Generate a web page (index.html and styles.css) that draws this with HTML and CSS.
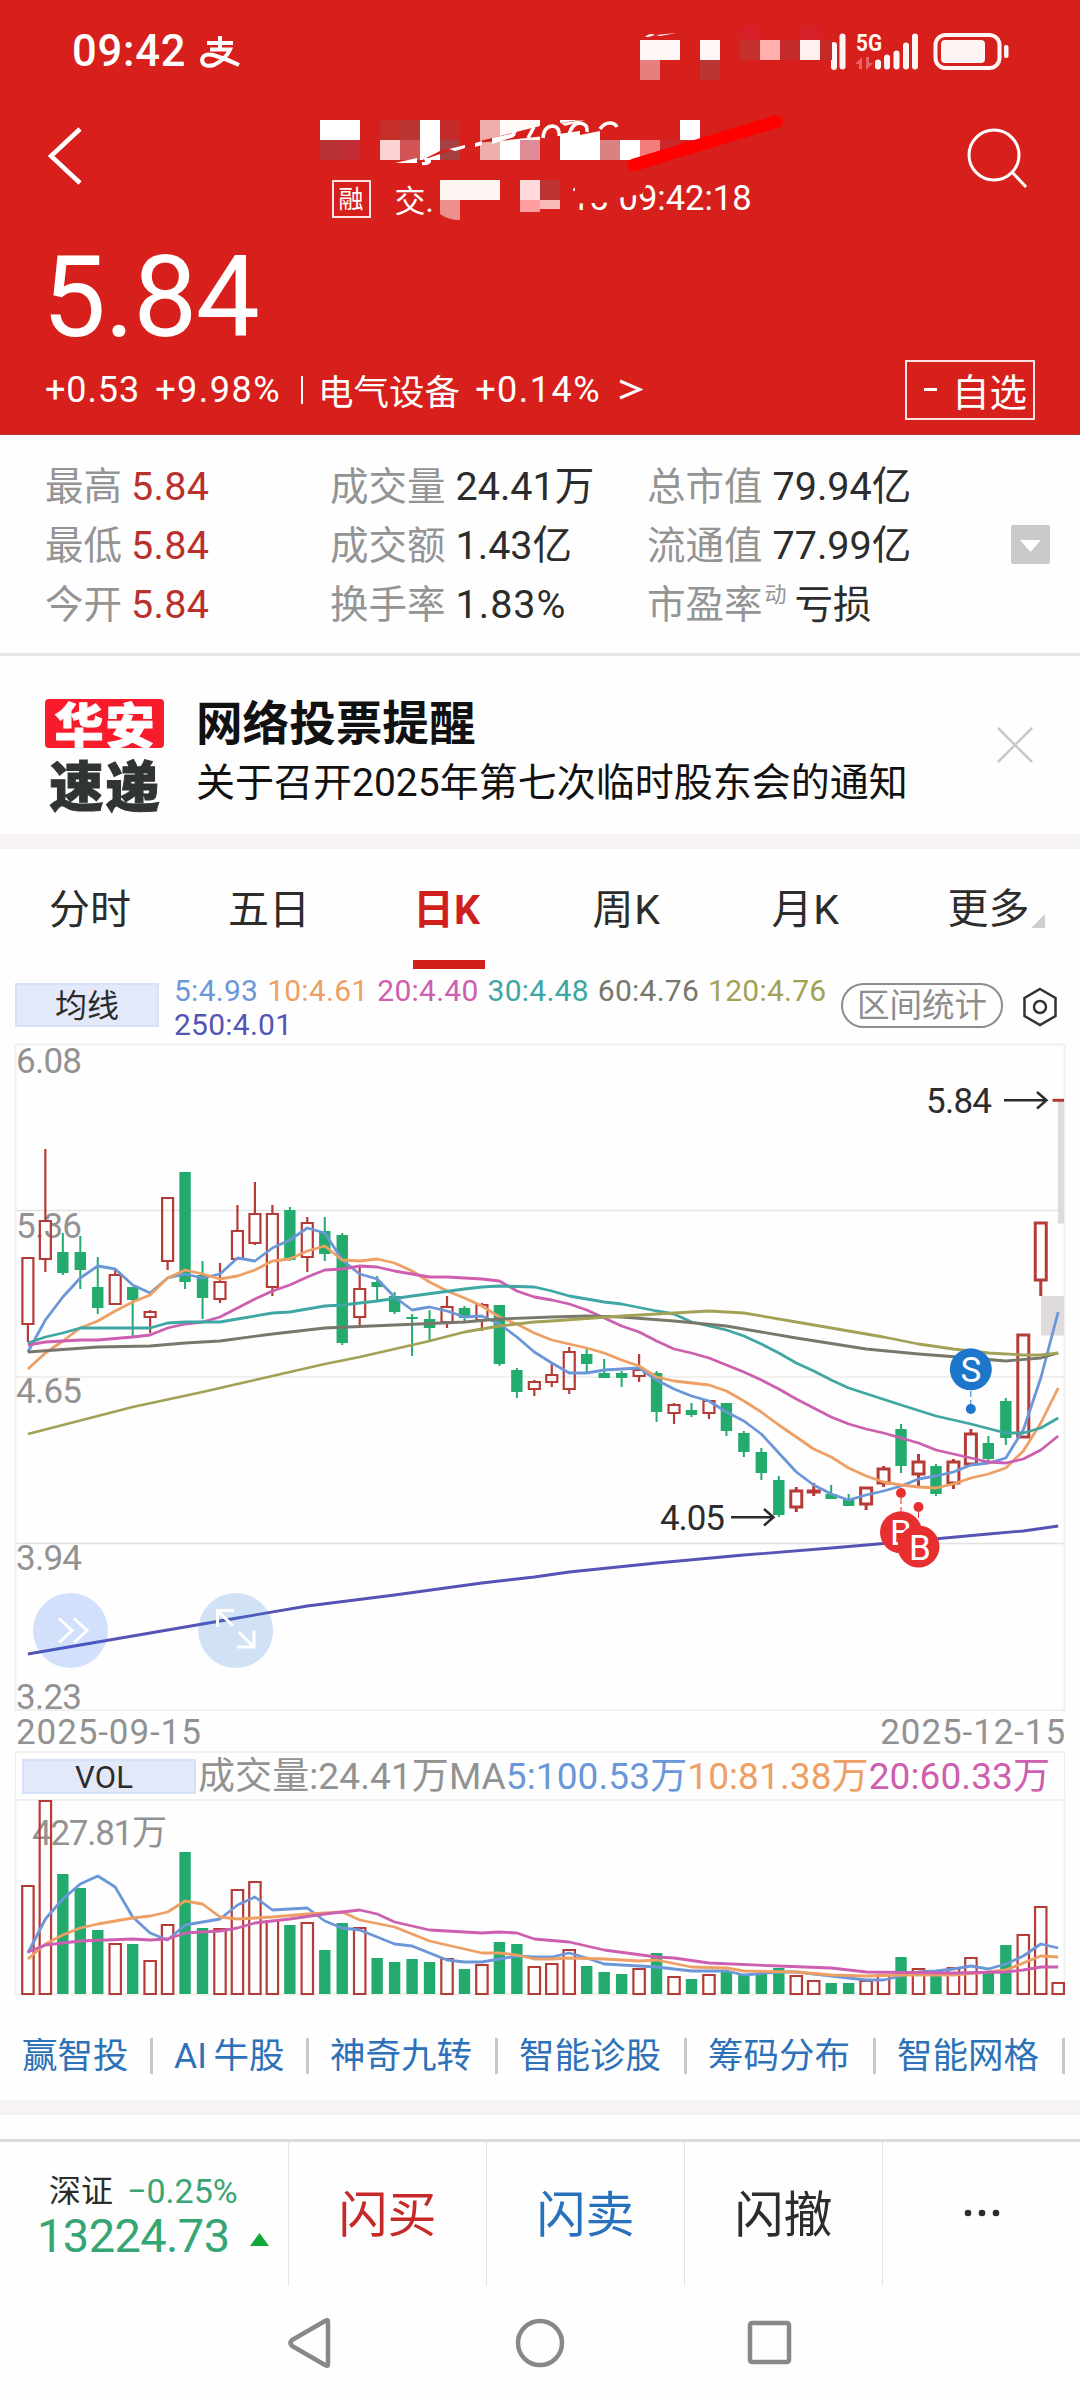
FILE: index.html
```html
<!DOCTYPE html>
<html lang="zh-CN">
<head>
<meta charset="utf-8">
<title>行情</title>
<link rel="stylesheet" href="styles.css">
</head>
<body>
<header class="header">
  <div class="status">
    <span class="clock">09:42</span>
    <svg class="pay" width="42" height="34" viewBox="0 0 42 34"><path d="M8 8H34M21 1V14M11 14.500H31Q27 24 15 30Q4 33 3 25Q4 18 14 20Q28 24 40 30"/></svg>
    <svg class="signal" width="190" height="46" viewBox="828 28 190 46">
      <path class="bar" d="M834 44V66M842.5 35.500V65.500M878 61.500V65.500M887 56.500V65.500M896.500 52.500V65.500M906 44.500V65.500M915 35.500V65.500"/>
      <text x="856" y="50" class="net" textLength="26" lengthAdjust="spacingAndGlyphs">5G</text>
      <path class="updown" d="M855 63L862 56V68H859V63ZM866 56V69L873 62H869V56Z"/>
      <rect class="battery" x="935.500" y="34" width="64" height="33" rx="10"/>
      <rect class="level" x="941" y="39" width="44" height="23" rx="4"/>
      <rect class="level" x="1004" y="44" width="4.500" height="13" rx="2"/>
    </svg>
  </div>
  <div class="titlebar">
    <svg class="back" width="34" height="60" viewBox="0 0 34 60"><path d="M32 3L3 30L32 57"/></svg>
    <div class="subtitle"><span class="tag">融</span><span class="state">交.</span><span class="day">15</span><span class="time">09:42:18</span></div>
    <svg class="search" width="64" height="64" viewBox="0 0 64 64"><circle cx="29" cy="29" r="25"/><path d="M47 46L61 61"/></svg>
  </div>
  <div class="price">5.84</div>
  <div class="change">
    <span class="delta">+0.53</span><span class="pct">+9.98%</span><i class="bar-sep"></i><span class="sector">电气设备</span><span class="pct">+0.14%</span><svg class="more" width="24" height="22" viewBox="0 0 24 22"><path d="M1 2L21 10.500L1 19"/></svg>
    <button class="watch"><span class="minus"></span>自选</button>
  </div>
  <svg class="mosaic" width="1080" height="230" viewBox="0 0 1080 230" id="mosaic"></svg>
</header>

<section class="stats">
  <div class="col c1">
    <div class="stat">最高<b class="up">5.84</b></div><div class="stat">最低<b class="up">5.84</b></div><div class="stat">今开<b class="up">5.84</b></div>
  </div>
  <div class="col c2">
    <div class="stat">成交量<b>24.41万</b></div><div class="stat">成交额<b>1.43亿</b></div><div class="stat">换手率<b class="rate">1.83%</b></div>
  </div>
  <div class="col c3">
    <div class="stat">总市值<b>79.94亿</b></div><div class="stat">流通值<b>77.99亿</b></div><div class="stat">市盈率<sup>动</sup><b class="loss">亏损</b></div>
  </div>
  <svg class="expand" width="39" height="39" viewBox="0 0 39 39"><rect width="39" height="39" rx="2"/><path d="M9 15H30L19.500 27Z"/></svg>
</section>

<section class="notice">
  <div class="brand"><span class="brand-top">华安</span><span class="brand-low">速递</span></div>
  <div class="message"><strong>网络投票提醒</strong><span>关于召开2025年第七次临时股东会的通知</span></div>
  <svg class="close" width="36" height="36" viewBox="0 0 36 36"><path d="M1 1L35 35M35 1L1 35"/></svg>
</section>
<div class="band"></div>

<nav class="tabs">
  <span>分时</span><span>五日</span><span class="active">日K</span><span>周K</span><span>月K</span><span class="last">更多<svg width="14" height="14" viewBox="0 0 14 14"><path d="M14 0V14H0Z"/></svg></span>
</nav>

<section class="legend">
  <span class="chip">均线</span>
  <div class="averages">
    <span class="m5">5:4.93</span><span class="m10">10:4.61</span><span class="m20">20:4.40</span><span class="m30">30:4.48</span><span class="m60">60:4.76</span><span class="m120">120:4.76</span><span class="m250">250:4.01</span>
  </div>
  <span class="pill">区间统计</span>
  <svg class="gear" width="36" height="40" viewBox="0 0 36 40"><path d="M18 2L33.500 11V29L18 38L2.500 29V11Z"/><circle cx="18" cy="20" r="6"/></svg>
</section>

<svg class="chart" width="1080" height="669" viewBox="0 1043 1080 669">
  <path class="grid" d="M15 1210.500H1065M15 1543.500H1065"/>
  <path class="frame" d="M15.500 1044.500H1064.500V1710H15.500ZM15 1377H1065"/>
  <g class="axis">
    <text x="16" y="1072.500" textLength="66">6.08</text>
    <text x="16" y="1238" textLength="66">5.36</text>
    <text x="16" y="1403" textLength="66">4.65</text>
    <text x="16" y="1570" textLength="66">3.94</text>
    <text x="16" y="1708.500" textLength="66">3.23</text>
  </g>
  <path class="gap" d="M1058 1101H1064V1223.500H1058ZM1041 1296H1064V1335.500H1041Z"/>
  <g id="candles"></g>
  <g id="averages"></g>
  <path class="flat" d="M1052.500 1100.300H1064"/>
  <g class="callout">
    <text x="926" y="1112.500" textLength="66">5.84</text>
    <path d="M1004 1100.300H1046M1037 1092L1046.500 1100.300L1037 1108.500"/>
    <text x="660" y="1530" textLength="65">4.05</text>
    <path d="M731 1517.300H773M764 1509L773.500 1517.300L764 1525.500"/>
  </g>
  <g class="sell"><path d="M970.800 1391V1404"/><circle cx="970.800" cy="1409" r="5"/><circle cx="970.800" cy="1369.300" r="21"/><text x="970.800" y="1382">S</text></g>
  <g class="buy"><path d="M901 1498V1512"/><circle cx="901" cy="1493" r="5"/><circle cx="901" cy="1532.300" r="21"/><text x="901" y="1545">B</text></g>
  <g class="buy"><path d="M918.500 1512V1526"/><circle cx="918.500" cy="1507" r="5"/><circle cx="918.500" cy="1546.500" r="21"/><text x="920" y="1560">B</text></g>
  <g class="tool"><circle cx="70.500" cy="1630.500" r="37.500"/><path d="M59 1618.500L72 1630.500L59 1642.500M74 1618.500L87 1630.500L74 1642.500"/></g>
  <g class="tool tool-alt"><circle cx="235.700" cy="1630.500" r="37.500"/><path d="M217.500 1627V1610.500H234M218 1611L233 1626M254 1630.500V1647H237M253.500 1646.500L238.500 1632"/></g>
</svg>

<div class="dates"><span>2025-09-15</span><span>2025-12-15</span></div>

<section class="volume-head">
  <span class="vol">VOL</span>
  <span class="sum">成交量:24.41万MA</span><span class="m5">5:100.53万</span><span class="m10">10:81.38万</span><span class="m20">20:60.33万</span>
</section>
<svg class="chart" width="1080" height="197" viewBox="0 1799 1080 197">
  <path class="frame" d="M15.500 1800H1064.500V1994.500H15.500Z"/>
  <text class="peak" x="32" y="1845" textLength="135">427.81万</text>
  <g id="volumes"></g>
  <g id="volume-averages"></g>
</svg>

<nav class="links">
  <span class="l1">赢智投</span><span class="l2">AI 牛股</span><span>神奇九转</span><span>智能诊股</span><span>筹码分布</span><span>智能网格</span>
</nav>
<div class="band"></div>

<footer class="actions">
  <div class="index"><div class="line">深证<span>−0.25%</span></div><div class="points">13224.73<svg width="19" height="13" viewBox="0 0 19 13"><path d="M9.500 0L19 13H0Z"/></svg></div></div>
  <span class="act buy-act">闪买</span><span class="act sell-act">闪卖</span><span class="act">闪撤</span>
  <span class="act dots"><svg width="36" height="8" viewBox="0 0 36 8"><circle cx="4" cy="4" r="3.300"/><circle cx="18" cy="4" r="3.300"/><circle cx="32" cy="4" r="3.300"/></svg></span>
</footer>
<div class="sysnav">
  <svg width="50" height="54" viewBox="0 0 50 54"><path d="M43 6V48Q43 51 40 49L7 30Q4 27 7 24L40 5Q43 3 43 6Z"/></svg>
  <svg width="54" height="54" viewBox="0 0 54 54"><circle cx="27" cy="27" r="22"/></svg>
  <svg width="50" height="54" viewBox="0 0 50 54"><rect x="5" y="7" width="39" height="39" rx="2"/></svg>
</div>
<script src="chart.js"></script>
</body>
</html>
```
FILE: styles.css
```css
* { box-sizing: border-box; }
body {
  margin: 0;
  width: 1080px;
  height: 2400px;
  overflow: hidden;
  display: flex;
  flex-direction: column;
  background: #fefefe;
  color: #2c2c2c;
  font-family: Roboto, "Noto Sans CJK SC", sans-serif;
}
body > * { flex: none; }
svg { display: block; flex: none; }
svg path, svg circle, svg rect { fill: none; }

.header { position: relative; height: 435px; background: #d71f1b; color: #fff; border-bottom: 1px solid #a93a38; }
.status { height: 103px; padding: 0 62px 0 72px; display: flex; align-items: center; }
.clock { font-size: 43.500px; font-weight: 500; line-height: 60px; letter-spacing: 0.8px; }
.pay { margin-left: 13px; }
.pay path { stroke: #fff; stroke-width: 4; }
.signal { margin-left: auto; }
.signal .bar { stroke: #fff5f5; stroke-width: 6; stroke-linecap: round; }
.net { font-size: 24px; font-weight: 700; fill: #fff5f5; }
.signal .updown { fill: #ea6365; }
.signal .battery { stroke: #fff5f5; stroke-width: 4; }
.signal .level { fill: #fff5f5; }

.titlebar { height: 127px; padding: 23px 51px 0 48px; display: flex; justify-content: space-between; align-items: flex-start; }
.back path { stroke: #fff; stroke-width: 4.5; }
.search circle, .search path { stroke: #fff; stroke-width: 3; }
.subtitle { display: flex; align-items: center; margin: 50px 0 0 46px; height: 44px; width: 430px; font-size: 34.500px; }
.tag { width: 39px; height: 38px; margin-top: 1px; border: 2px solid #fde4e4; font-size: 25px; line-height: 35px; text-align: center; }
.state { font-size: 31px; margin-left: 24px; width: 54px; }
.day { margin-left: 122px; width: 48px; letter-spacing: -1px; }
.price { height: 120px; padding-left: 42px; font-size: 114px; line-height: 135px; letter-spacing: -1.5px; }
.change { height: 79px; padding: 0 45px; display: flex; align-items: center; font-size: 36px; }
.delta { letter-spacing: 0.9px; }
.pct { margin-left: 15px; letter-spacing: 1.5px; }
.bar-sep { width: 2px; height: 28px; margin: 0 15px 0 20px; background: #fff; }
.sector { font-size: 35.500px; }
.more { margin-left: 18px; }
.more path { stroke: #fff; stroke-width: 3; }
.watch { margin-left: auto; width: 130px; height: 60px; padding: 0 6px 0 0; border: 2px solid #fde4e4; background: none; color: #fff; font: 37.500px "Noto Sans CJK SC", sans-serif; line-height: 54px; display: flex; justify-content: flex-end; align-items: center; }
.minus { width: 13px; height: 3px; margin-right: 15px; background: #fff; }
.mosaic { position: absolute; left: 0; top: 0; }

.stats { height: 221px; padding: 23px 30px 0 45px; display: flex; align-items: flex-start; border-bottom: 3px solid #e5e5e5; }
.col { display: flex; flex-direction: column; }
.c1 { width: 285px; }
.c2 { width: 317px; }
.c3 { width: 364px; }
.stat { height: 59px; line-height: 58px; font-size: 38.500px; color: #949494; white-space: nowrap; display: flex; }
.stat b { margin-left: 10px; font-weight: 400; font-size: 39.500px; color: #2c2c2c; letter-spacing: 0; }
.stat .up { margin-left: 9px; color: #b9302d; letter-spacing: 0.3px; }
.stat .rate { letter-spacing: 1px; }
.stat sup { font-size: 22px; line-height: 38px; margin-left: 2px; }
.stat .loss { font-size: 38.500px; margin-left: 8px; }
.expand { margin-top: 67px; }
.expand rect { fill: #cbc9ca; }
.expand path { fill: #fff; }

.notice { height: 178px; padding: 0 47px 0 45px; display: flex; align-items: center; }
.brand { width: 119px; height: 116px; margin-top: 23px; display: flex; flex-direction: column; align-items: center; justify-content: space-between; font-family: "Noto Sans CJK SC", sans-serif; font-weight: 900; }
.brand-top, .brand-low { width: 119px; text-align: center; white-space: nowrap; }
.brand-top { height: 49px; border-radius: 4px; background: #f71b2b; color: #fff; font-size: 49px; line-height: 47px; letter-spacing: 2px; text-indent: 2px; -webkit-text-stroke: 1px #fff; }
.brand-low { height: 56px; line-height: 50px; font-size: 54px; color: #303433; letter-spacing: 2px; text-indent: 2px; -webkit-text-stroke: 1px #303433; }
.message { margin: 16px 0 0 32px; display: flex; flex-direction: column; color: #111; }
.message strong { font-size: 46.600px; line-height: 60px; }
.message span { font-size: 39px; line-height: 58px; white-space: nowrap; letter-spacing: 0; }
.close { margin-left: auto; }
.close path { stroke: #c9c9c9; stroke-width: 2.5; }
.band { height: 15px; background: #f6f2f6; }

.tabs { height: 120px; padding: 0 33px 0 49px; display: flex; font-size: 41px; line-height: 122px; }
.tabs span { width: 179px; height: 120px; }
.tabs span:first-child { width: 180px; }
.tabs .active { width: 72px; margin: 0 108px 0 7px; color: #d01f1d; font-weight: 700; border-bottom: 9px solid #d41e1b; }
.tabs span:nth-child(4) { width: 180px; letter-spacing: 0.7px; }
.tabs span:nth-child(5) { width: 177px; letter-spacing: 0.7px; }
.tabs .last { width: 100px; display: flex; align-items: center; }
.last svg { margin: 24px 0 0 1px; }
.last path { fill: #d0ccd0; }

.legend { height: 74px; padding: 0 22px 0 15px; display: flex; align-items: flex-start; }
.chip { width: 144px; height: 44px; margin-top: 14px; border: 2px solid #d5e1f7; background: #e3e9f8; text-align: center; font-size: 32px; line-height: 42px; }
.averages { width: 680px; margin-right: -13px; padding: 5px 0 0 15px; display: flex; flex-wrap: wrap; column-gap: 9px; font-size: 30px; line-height: 34px; letter-spacing: 0.25px; }
.m5 { color: #6b97d9; } .m10 { color: #ee9f64; } .m20 { color: #cd5eb0; } .m30 { color: #3ea6a3; }
.m60 { color: #77776b; } .m120 { color: #a3a155; } .m250 { color: #5454b4; }
.pill { margin: 14px 0 0 15px; width: 162px; height: 45px; border: 2px solid #8d8d8d; border-radius: 23px; color: #8d8d8d; text-align: center; font-size: 32.500px; line-height: 43px; }
.gear { margin: 18px 0 0 19px; }
.gear path, .gear circle { stroke: #333; stroke-width: 2.5; }

.chart text { font-size: 35px; }
.chart .grid { stroke: #e2e2e2; stroke-width: 1.3; }
.chart .frame { stroke: #f1f0f1; stroke-width: 2; }
.chart .axis text, .chart .peak { fill: #929292; }
.chart .gap { fill: #dedade; }
.chart .red { stroke: #b53b36; stroke-width: 2.2; }
.chart .green { fill: #22ab6c; stroke: none; }
.chart .flat { stroke: #b53b36; stroke-width: 3; }
.chart .ma { stroke: currentColor; stroke-width: 2.8; stroke-linejoin: round; }
.callout text { fill: #2c2c2c; }
.callout path { stroke: #2c2c2c; stroke-width: 2.5; }
.chart .sell circle { fill: #1d76ca; } .sell path { stroke: #1d76ca; stroke-width: 1; stroke-dasharray: 6 3; }
.chart .buy circle { fill: #e72f2f; } .buy path { stroke: #e72f2f; stroke-width: 1; stroke-dasharray: 6 3; }
.sell text, .buy text { fill: #fff; text-anchor: middle; }
.chart .tool circle { fill: #2769f5; fill-opacity: 0.2; }
.chart .tool-alt circle { fill: #2b7bdc; fill-opacity: 0.21; }
.tool path { stroke: #fff; stroke-width: 3; }

.dates { height: 39px; padding: 0 14px 0 16px; display: flex; justify-content: space-between; font-size: 35px; line-height: 42px; color: #929292; letter-spacing: 0.9px; }
.volume-head { height: 48px; margin: 0 15px; padding-left: 6px; border: solid #f1f0f1; border-width: 2px 1px 0; display: flex; align-items: center; font-size: 37px; line-height: 49px; letter-spacing: 0.1px; white-space: nowrap; }
.vol { width: 174px; height: 35px; margin-right: 2px; padding-right: 10px; border: 2px solid #d5e1f7; background: #e3e9f8; text-align: center; font-size: 31px; line-height: 33px; }
.sum { color: #929292; }

.links { height: 104px; padding: 16px 0 0 22px; display: flex; align-items: center; color: #2d72b8; font-size: 35.500px; white-space: nowrap; }
.links span { width: 189px; height: 36px; line-height: 36px; padding-left: 21px; border-right: 3px solid #c8c8c8; }
.links .l1 { width: 131px; padding-left: 0; }
.links .l2 { width: 156px; padding-left: 21px; word-spacing: -2px; }

.actions { margin-top: 24px; height: 147px; border-top: 3px solid #dcdcdc; display: flex; }
.index { width: 288px; padding: 26px 0 0 37px; }
.line { display: flex; padding-left: 12px; font-size: 32px; line-height: 46px; }
.line span { margin-left: 14px; font-size: 34px; color: #3aa474; }
.points { display: flex; align-items: center; font-size: 47px; line-height: 44px; color: #35a573; letter-spacing: -0.6px; }
.points svg { margin: 6px 0 0 20px; }
.points path { fill: #12a838; }
.act { width: 198px; padding: 0 0 7px 0; border-left: 1.500px solid #e3e3e3; display: flex; align-items: center; justify-content: center; font-size: 49px; }
.dots { padding: 0 0 2px; }
.buy-act { color: #c62a28; } .sell-act { color: #2872bd; }
.act circle { fill: #2c2c2c; }
.sysnav { height: 114px; display: flex; justify-content: center; align-items: center; gap: 178px; padding-right: 1px; }
.sysnav path, .sysnav circle, .sysnav rect { stroke: #888; stroke-width: 4.5; }
```
FILE: chart.js
```js
const NS = 'http://www.w3.org/2000/svg';
const FIRST_X = 27.9, STEP = 17.463;
const xAt = i => FIRST_X + i * STEP;
function add(parent, tag, attrs) {
  const el = document.createElementNS(NS, tag);
  for (const k in attrs) el.setAttribute(k, attrs[k]);
  document.getElementById(parent).appendChild(el);
}

// direction, high, body top, body bottom, low
const candles = `r 1258 1258 1324 1342|r 1149 1221 1259 1272|g 1233 1252 1273 1275|g 1236 1252 1270 1289|g 1257 1287 1308 1314|r 1270 1275 1304 1305|g 1287 1287 1300 1337|r 1310 1312 1317 1333|r 1198 1198 1261 1270|g 1172 1172 1282 1289|g 1261 1275 1298 1319|r 1263 1282 1299 1303|r 1205 1231 1259 1259|r 1182 1214 1243 1245|r 1205 1214 1287 1296|g 1207 1210 1260 1261|r 1217 1223 1257 1272|g 1217 1231 1254 1261|g 1233 1235 1343 1345|r 1266 1289 1317 1325|g 1276 1282 1287 1302|g 1292 1296 1312 1314|g 1314 1317 1319 1356|g 1310 1319 1328 1340|r 1296 1307 1322 1328|g 1306 1308 1318 1323|r 1303 1305 1320 1331|g 1305 1305 1364 1366|g 1368 1370 1392 1398|r 1380 1382 1389 1396|r 1364 1375 1382 1387|r 1347 1352 1389 1394|g 1347 1354 1364 1374|g 1359 1373 1378 1378|g 1371 1373 1378 1387|r 1354 1370 1376 1382|g 1371 1373 1412 1422|r 1403 1405 1413 1424|g 1403 1410 1415 1417|r 1401 1401 1413 1419|g 1403 1403 1431 1436|g 1431 1433 1452 1457|g 1448 1452 1473 1480|g 1476 1480 1515 1517|r 1487 1491 1507 1512|r 1483 1491 1492 1496|g 1485 1494 1499 1499|g 1494 1499 1506 1506|r 1488 1488 1504 1510|r 1466 1469 1483 1487|g 1424 1429 1466 1473|r 1454 1462 1474 1486|g 1464 1466 1494 1496|r 1459 1462 1483 1489|r 1429 1434 1464 1464|g 1436 1443 1459 1462|g 1398 1401 1438 1445|r 1335 1335 1437 1438|r 1223 1223 1280 1296`
  .split('|').map(s => s.split(' ').map((v, i) => i ? +v : v));
candles.forEach(([dir, high, top, bottom, low], i) => {
  const x = xAt(i);
  const bold = i > 43 ? 'stroke-width:3px' : '';
  if (dir === 'r') {
    add('candles', 'path', { class: 'red', style: bold, d: `M${x} ${high}V${top}M${x} ${bottom}V${low}M${x - 5.5} ${top}h11V${bottom}h-11Z` });
  } else {
    add('candles', 'path', { class: 'green', d: `M${x - 1} ${high}h2V${low}h-2ZM${x - 5.7} ${top}h11.4V${bottom}h-11.4Z` });
  }
});

const volumes = 'r1886 r1801 g1874 g1888 g1930 r1944 g1944 r1961 r1925 g1852 g1928 r1929 r1890 r1882 r1921 g1925 r1923 g1950 g1923 r1928 g1958 g1962 g1959 g1962 r1959 g1969 r1965 g1942 g1944 r1967 r1964 r1950 g1966 g1972 g1974 r1969 g1953 r1977 g1979 r1975 g1972 g1974 g1974 g1968 r1976 r1981 g1983 g1983 r1981 r1975 g1957 r1969 g1976 r1968 r1958 g1973 g1945 r1935 r1907 r1983'.split(' ');
volumes.forEach((v, i) => {
  const x = xAt(i), top = +v.slice(1);
  if (v[0] === 'r') add('volumes', 'path', { class: 'red', d: `M${x - 5.7} ${top}h11.4V1994h-11.4Z` });
  else add('volumes', 'path', { class: 'green', d: `M${x - 5.7} ${top}h11.4V1994h-11.4Z` });
});

// "day:y" points; the days between two points are joined by a straight line
function line(group, cls, points) {
  const d = points.split(' ').map(p => p.split(':')).map(([i, y], n) => `${n ? 'L' : 'M'}${xAt(+i).toFixed(1)} ${y}`).join('');
  add(group, 'path', { class: 'ma ' + cls, d });
}
const dense = s => s.split(' ').map((y, i) => i + ':' + y).join(' ');
line('averages', 'm5', dense('1352 1320 1297 1278 1266 1269 1285 1293 1278 1274 1278 1274 1258 1261 1248 1240 1228 1233 1260 1274 1279 1297 1310 1307 1311 1317 1316 1324 1337 1352 1363 1373 1373 1370 1369 1368 1380 1389 1396 1401 1412 1421 1434 1453 1472 1485 1494 1500 1495 1491 1486 1479 1476 1472 1465 1463 1458 1430 1378 1312'));
line('averages', 'm10', dense('1369 1353 1341 1328 1321 1311 1302 1295 1278 1270 1274 1279 1276 1270 1261 1259 1251 1246 1260 1261 1259 1263 1271 1282 1291 1298 1306 1317 1324 1333 1340 1344 1348 1353 1360 1366 1377 1381 1383 1385 1391 1401 1412 1425 1437 1449 1457 1468 1476 1482 1485 1487 1488 1484 1478 1474 1468 1451 1423 1388'));
line('averages', 'm20', dense('1345 1342 1341 1340 1340 1338.5 1337 1335 1328 1324 1322 1317 1308 1299 1291 1285 1277 1270 1269 1266 1267 1271 1274 1277 1277 1278 1279 1281 1291 1297 1300 1304 1310 1318 1326 1332 1341 1349 1353 1358 1365 1372 1380 1389 1399 1408 1417 1424 1429 1433 1438 1443 1450 1454 1458 1462 1463 1459 1450 1436'));
line('averages', 'm30', '0:1343 1:1337 2:1333 3:1328 7:1328 8:1323 9:1322 11:1322 12:1319 14:1313 15:1312 17:1306 18:1305 20:1301 22:1296 25:1289 26:1287 27:1286 29:1287 30:1291 31:1296 33:1302 34:1304 36:1311 37:1314 38:1322 40:1330 41:1336 42:1344 43:1353 44:1363 45:1371 46:1380 47:1388 50:1405 52:1416 54:1424 56:1433 57:1433 58:1428 59:1418');
line('averages', 'm60', '0:1352 4:1347 7:1346 9:1343 11:1341 14:1334 17:1328 21:1325 25:1322 27:1319 30:1317 32:1316 34:1317 37:1321 40:1326 44:1338 48:1349 51:1354 54:1358 56:1361 58:1358 59:1353');
line('averages', 'm120', '0:1434 2:1425 4:1416 6:1407 10:1392 13:1380 15:1372 17:1364 19:1357 21:1349 23:1341 25:1332 27:1326 29:1322 30:1321 34:1316 38:1312 39:1311 40:1312 41:1313 44:1322 47:1331 49:1337 51:1344 53:1349 55:1353 57:1355 58:1355 59:1353');
line('averages', 'm250', '0:1654 8:1630 12:1618 16:1606 21:1595 26:1583 29:1577 31:1572 36:1563 41:1555 46:1548 50:1542 55:1534 57:1531 59:1526');
line('volume-averages', 'm5', '0:1953 1:1919 2:1899 3:1884 4:1876 5:1887 6:1917 7:1933 8:1940 9:1925 11:1919 12:1905 13:1897 14:1910 15:1909 16:1908 17:1921 18:1928 19:1930 20:1937 21:1944 22:1946 23:1953 24:1960 25:1962 26:1962 27:1959 28:1956 29:1957 30:1957 31:1953 32:1958 33:1964 35:1966 36:1967 38:1971 40:1971 41:1975 43:1972 44:1972 46:1976 48:1980 49:1980 50:1976 51:1972 52:1971 53:1969 54:1966 55:1969 56:1964 57:1956 58:1944 59:1948');
line('volume-averages', 'm10', '0:1959 1:1944 2:1935 3:1928 4:1924 6:1918 7:1916 8:1912 9:1901 10:1904 11:1917 12:1919 13:1918 14:1917 16:1914 18:1912 19:1920 21:1927 23:1941 26:1953 27:1953 28:1955 29:1959 30:1959 31:1958 33:1959 35:1961 36:1960 38:1967 40:1968 41:1971 44:1972 46:1975 48:1976 50:1975 53:1975 55:1972 56:1970 57:1963 58:1956 59:1957');
line('volume-averages', 'm20', '0:1952 1:1945 3:1941 6:1939 7:1940 8:1939 9:1933 11:1931 12:1928 13:1923 15:1919 17:1914 18:1912 19:1910 20:1914 21:1922 23:1930 26:1933 27:1932 28:1933 29:1939 31:1942 33:1950 36:1957 37:1958 39:1963 43:1966 46:1968 48:1972 53:1973 56:1972 57:1970 58:1967 59:1967');

// censored cells in the header: x, y, width, height, colour
const cells = [
  [640,40,40,20,'#fff6f6'],[700,40,20,20,'#fff6f6'],[740,40,20,20,'#c52f2c'],[760,40,20,20,'#ffb0ad'],[780,40,20,20,'#c52a2b'],[800,40,20,20,'#ffefef'],[820,40,12,20,'#c32b2b'],[640,60,20,20,'#e5807e'],[700,60,20,20,'#b93632'],[740,26,20,14,'#d61f29'],[800,26,20,14,'#d61f29'],
  [320,120,40,20,'#fff'],[380,120,20,20,'#c52f2a'],[400,120,20,20,'#b93632'],[420,120,20,40,'#fff'],[440,120,20,20,'#c32b2a'],[480,120,20,40,'#efaeab'],[500,120,40,20,'#fffaf8'],[560,120,20,20,'#fff'],[680,120,20,20,'#fff'],
  [320,140,20,20,'#b93233'],[340,140,20,20,'#c02c34'],[380,140,20,20,'#fdd3d2'],[400,140,20,20,'#d35454'],[440,140,20,20,'#a43f42'],[500,140,20,20,'#fff'],[520,140,20,20,'#df8c96'],[560,140,40,20,'#fff'],[600,140,20,20,'#d9827f'],[620,140,20,20,'#fff'],[640,140,20,20,'#f37b7a'],[660,140,20,20,'#c9282c'],
  [440,180,60,20,'#fff5f3'],[520,180,20,20,'#ffdcdb'],[540,180,20,20,'#bb3431'],[520,200,20,12,'#ff9c9f'],[540,200,20,9,'#f8b9b9']
];
cells.forEach(([x, y, width, height, c]) => add('mosaic', 'rect', { x, y, width, height, style: 'fill:' + c }));
const shape = (d, style) => add('mosaic', 'path', { d, style });
shape('M440 200H460V220Q448 220 440 214Z', 'fill:#ec8f8d');
shape('M420 161L440 154L475 143L500 141L545 136L600 128L600 120H580L540 126L500 136L460 146L440 151Z', 'fill:#d71f1b');
shape('M560 140L580 135L600 131V141H560Z', 'fill:#fff');
shape('M395 163L417 158V163ZM424 158H431V162Q428 166 422 165V162H425ZM449 149L465 145V148L455 151ZM475 143L482 141V145L475 147ZM492 138L514 133V137L492 144ZM500 131L518 127L515 136L510 137L513 130ZM561 123L585 120L565 126Z', 'fill:#fff');
shape('M528 138L534 127M543 138Q544 126 553 126Q560 127 559 136M569 135Q572 123 580 123Q588 124 587 132M600 129Q604 123 610 123Q615 123 617 127', 'stroke:#fff;stroke-width:3.5');
shape('M575 178H612V203L595 202L575 204ZM618 178H650L642 194L618 198Z', 'fill:#d71f1b');
shape('M633.500 165L776.500 121.500', 'stroke:#f00;stroke-width:12.500;stroke-linecap:round');
shape('M645 37Q650 32 655 35L648 37ZM656 35L677 33L660 36Z', 'fill:#fff');
```
